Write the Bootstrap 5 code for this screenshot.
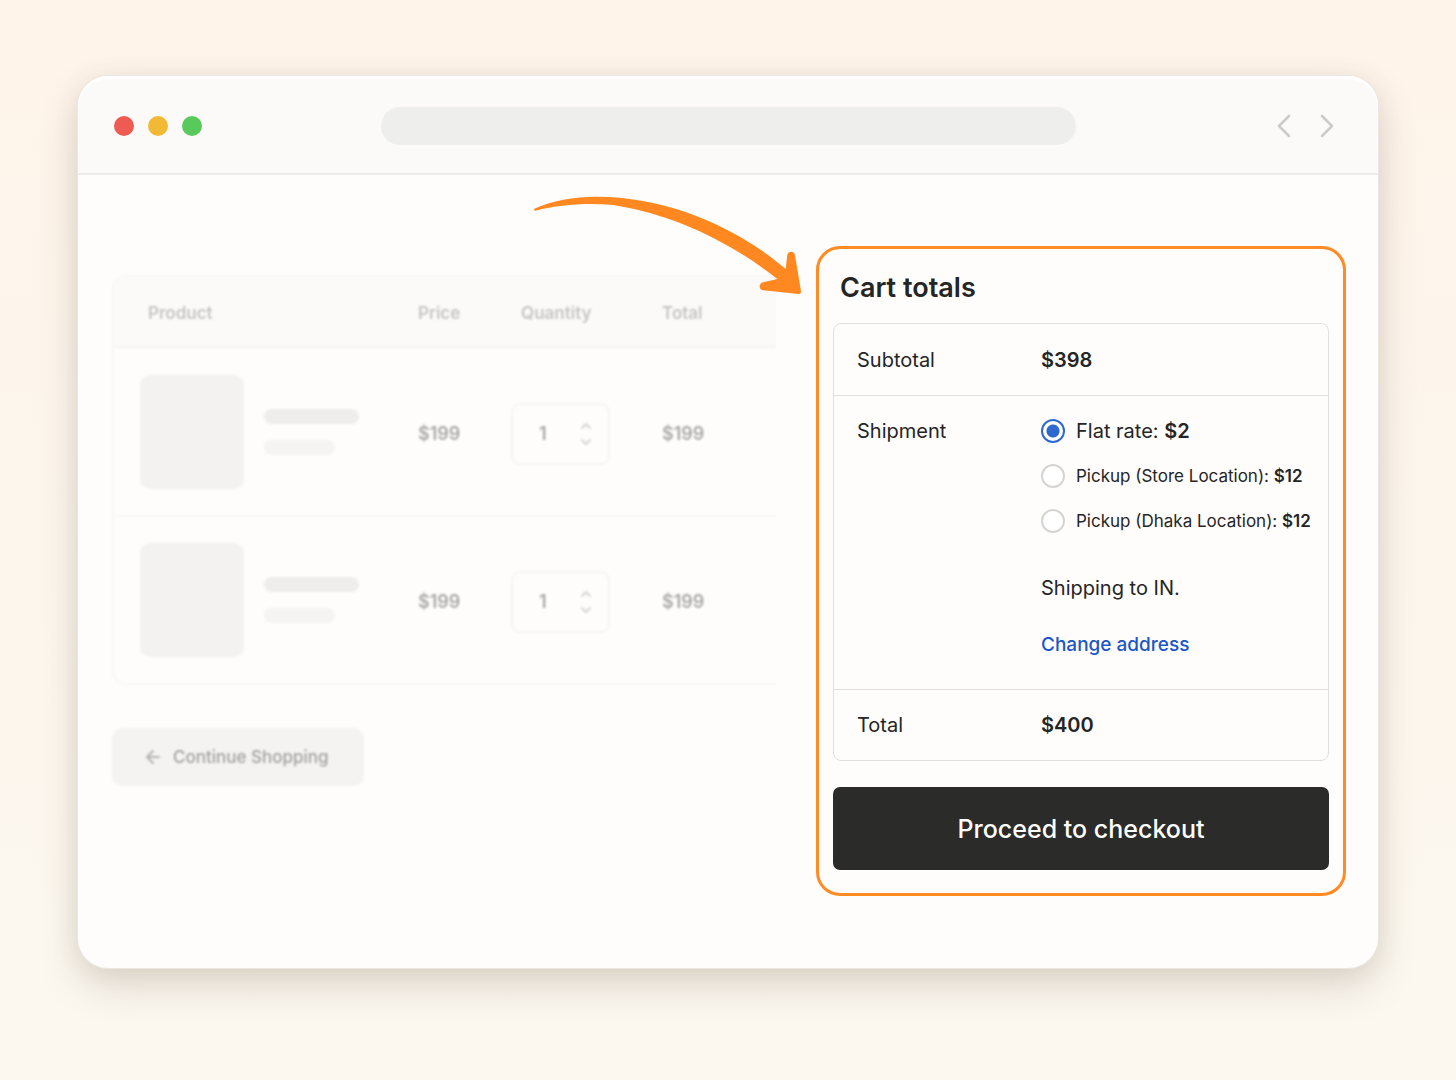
<!DOCTYPE html>
<html lang="en">
<head>
<meta charset="utf-8">
<meta name="viewport" content="width=device-width, initial-scale=1">
<title>Cart</title>
<link href="https://cdn.jsdelivr.net/npm/bootstrap@5.3.0/dist/css/bootstrap.min.css" rel="stylesheet">
<style>
body{font-family:Inter,"Liberation Sans",sans-serif;font-size:20px;line-height:24px;color:#252525;background:linear-gradient(#fef4ea,#fcf8f0);min-height:100vh;padding:76px 78px}
.browser{background:#fefdfc;border-radius:30px;box-shadow:0 0 0 1px #ece6e0,0 18px 40px rgba(100,85,70,.2),0 2px 24px rgba(100,85,70,.09)}
.browser-bar{display:grid;grid-template-columns:1fr 695px 1fr;align-items:center;height:99px;padding:2px 36px 0;background:#fbfaf9;border-bottom:2px solid #ebebea;border-radius:30px 30px 0 0;box-shadow:inset 0 3px 2px #fff}
.dots{gap:14px}
.dot{width:20px;height:20px;border-radius:50%}
.dot-r{background:#ee5b53}.dot-y{background:#f2b935}.dot-g{background:#58ca5b}
.address{height:38px;border:0;border-radius:19px;background:#eeeeed;width:100%;padding:0 20px}
.nav-group{gap:15px;padding-right:4px}
.nav-btn{border:0;background:none;padding:0;line-height:0}
.shop{padding:71px 32px 72px 34px;gap:40px}
.items{padding-top:29px;min-width:0}
.soft{filter:blur(.8px)}
.items-box{border:2px solid #f8f7f6;border-right:0;border-radius:14px 0 0 14px;overflow:hidden}
.items-table{width:100%;table-layout:fixed;border-collapse:separate;border-spacing:0;font-size:18px;font-weight:600;color:#a9a8a7}
.items-table th{height:71px;background:#fbfaf9;color:#c6c5c4;font-size:17px;font-weight:600;border-bottom:2px solid #f4f3f2;padding:2px 0 0}
.items-table td{height:169px;border-bottom:2px solid #f8f7f6;padding:4px 0 0}
.items-table tbody tr:last-child td{border-bottom:0;height:166px}
.items-table th:first-child{padding-left:34px}
.items-table td:first-child{padding:0 0 0 26px}
.items-table .qty-head{padding-left:10px}
.c-price{width:93px}.c-qty{width:151px}.c-total{width:114px}
.thumb{width:104px;height:114px;border-radius:10px;background:#f3f2f1}
.line-a{width:95px;height:15px;border-radius:8px;background:#eeedec}
.line-b{width:71px;height:15px;border-radius:8px;background:#f5f4f3}
.qty{width:99px;height:62px;border:2px solid #f5f4f3;border-radius:9px;padding:0 15px 0 26px}
.qty input{width:24px;border:0;background:none;padding:0;color:#a9a8a7;font-weight:600;appearance:textfield;-moz-appearance:textfield}
.qty input::-webkit-inner-spin-button{appearance:none;-webkit-appearance:none}
.back-btn{margin-top:43px;height:58px;padding:0 35px 0 34px;border:0;border-radius:10px;background:#f4f3f2;color:#a2a1a0;font-size:17px;font-weight:500;gap:13px}
.totals{width:530px;flex:none;border:3px solid #ff8b22;border-radius:24px;padding:21px 14px 23px}
.totals h2{font-size:27px;line-height:36px;font-weight:600;margin:0 0 17px 7px}
.totals-box{border:1px solid #e1e0df;border-radius:8px}
.totals-table{width:100%;border-collapse:separate;border-spacing:0}
.totals-table th{width:207px;font-weight:400;padding:24px 0 23px 23px;vertical-align:top}
.totals-table td{padding:24px 0 23px;font-weight:600;vertical-align:top}
.totals-table tr+tr>*{border-top:1px solid #e1e0df;padding-top:23px}
.totals-table .ship>*{font-weight:400;padding-bottom:32px}
.rates{gap:21px}
.rate{gap:11px}
.rate strong{font-weight:600}
.rate .form-check-input{width:24px;height:24px;margin:0;border:2px solid #d5d4d3;background-color:#fff;flex:none}
.rate .form-check-input:checked{border-color:#2f69d0;background-size:100%;background-image:radial-gradient(circle,#2f69d0 6px,#fff 7px)}
.rate-sm{font-size:17px}
.ship-to{margin:43px 0 33px}
.change{display:block;color:#1c57c5;font-size:19px;font-weight:500;text-decoration:none}
.checkout{height:83px;margin-top:26px;border:0;border-radius:7px;background:#2b2b29;color:#fff;font-size:25px;font-weight:500}
.arrow{position:absolute;left:-289px;top:-59px;pointer-events:none}
@media(max-width:1250px){body{padding:24px}.shop{flex-direction:column;padding:32px}.browser-bar{grid-template-columns:1fr 2fr 1fr}.arrow{display:none}.totals{width:100%}}
</style>
</head>
<body>
<main class="browser">
  <header class="browser-bar">
    <div class="dots d-flex"><span class="dot dot-r"></span><span class="dot dot-y"></span><span class="dot dot-g"></span></div>
    <input class="address" type="text" aria-label="Address">
    <div class="nav-group d-flex justify-content-end">
      <button class="nav-btn" type="button" aria-label="Back"><svg width="26" height="28" fill="none" stroke="#cccbca" stroke-width="2.6" stroke-linecap="round" stroke-linejoin="round"><path d="M18 4 8 14l10 10"/></svg></button>
      <button class="nav-btn" type="button" aria-label="Forward"><svg width="26" height="28" fill="none" stroke="#cccbca" stroke-width="2.6" stroke-linecap="round" stroke-linejoin="round"><path d="m10 4 10 10-10 10"/></svg></button>
    </div>
  </header>
  <div class="shop d-flex align-items-start">
    <section class="items flex-grow-1">
      <div class="items-box soft">
        <table class="items-table">
          <colgroup><col><col class="c-price"><col class="c-qty"><col class="c-total"></colgroup>
          <thead><tr><th>Product</th><th>Price</th><th class="qty-head">Quantity</th><th>Total</th></tr></thead>
          <tbody>
            <tr>
              <td><div class="d-flex align-items-center"><div class="thumb"></div><div class="d-flex flex-column gap-3 ms-3 ps-1"><span class="line-a"></span><span class="line-b"></span></div></div></td>
              <td>$199</td>
              <td><div class="qty d-flex align-items-center justify-content-between"><input type="number" value="1" aria-label="Quantity of first product"><svg width="14" height="28" fill="none" stroke="#d6d5d4" stroke-width="2" stroke-linecap="round" stroke-linejoin="round"><path d="m3 8 4-4 4 4M3 20l4 4 4-4"/></svg></div></td>
              <td>$199</td>
            </tr>
            <tr>
              <td><div class="d-flex align-items-center"><div class="thumb"></div><div class="d-flex flex-column gap-3 ms-3 ps-1"><span class="line-a"></span><span class="line-b"></span></div></div></td>
              <td>$199</td>
              <td><div class="qty d-flex align-items-center justify-content-between"><input type="number" value="1" aria-label="Quantity of second product"><svg width="14" height="28" fill="none" stroke="#d6d5d4" stroke-width="2" stroke-linecap="round" stroke-linejoin="round"><path d="m3 8 4-4 4 4M3 20l4 4 4-4"/></svg></div></td>
              <td>$199</td>
            </tr>
          </tbody>
        </table>
      </div>
      <button class="back-btn soft d-inline-flex align-items-center" type="button"><svg width="14" height="14" fill="none" stroke="#b5b4b3" stroke-width="2" stroke-linecap="round" stroke-linejoin="round"><path d="M13 7H1M7 1 1 7l6 6"/></svg>Continue Shopping</button>
    </section>
    <section class="totals position-relative">
      <svg class="arrow" width="280" height="110" viewBox="30 30 840 330" fill="#ff8820" aria-hidden="true"><path d="M43 86C95 62 160 50 230 50 450 50 660 148 797 267L802 224Q804 215 813 215 823 215 825 226L843 333Q844 342 836 342L729 331Q719 329 719 319 720 309 730 307L772 297C650 200 480 107 280 75 200 68 120 73 47 92 42 93 41 88 43 86Z"/></svg>
      <h2>Cart totals</h2>
      <div class="totals-box">
        <table class="totals-table">
          <tbody>
            <tr><th scope="row">Subtotal</th><td>$398</td></tr>
            <tr class="ship"><th scope="row">Shipment</th><td>
              <div class="rates d-flex flex-column">
                <div class="rate d-flex align-items-center"><input class="form-check-input" type="radio" name="rate" id="r1" checked><label for="r1">Flat rate: <strong>$2</strong></label></div>
                <div class="rate rate-sm d-flex align-items-center"><input class="form-check-input" type="radio" name="rate" id="r2"><label for="r2">Pickup (Store Location): <strong>$12</strong></label></div>
                <div class="rate rate-sm d-flex align-items-center"><input class="form-check-input" type="radio" name="rate" id="r3"><label for="r3">Pickup (Dhaka Location): <strong>$12</strong></label></div>
              </div>
              <p class="ship-to">Shipping to IN.</p>
              <a class="change" href="#">Change address</a>
            </td></tr>
            <tr><th scope="row">Total</th><td>$400</td></tr>
          </tbody>
        </table>
      </div>
      <button class="checkout w-100" type="button">Proceed to checkout</button>
    </section>
  </div>
</main>
<script src="https://cdn.jsdelivr.net/npm/bootstrap@5.3.0/dist/js/bootstrap.bundle.min.js"></script>
</body>
</html>
